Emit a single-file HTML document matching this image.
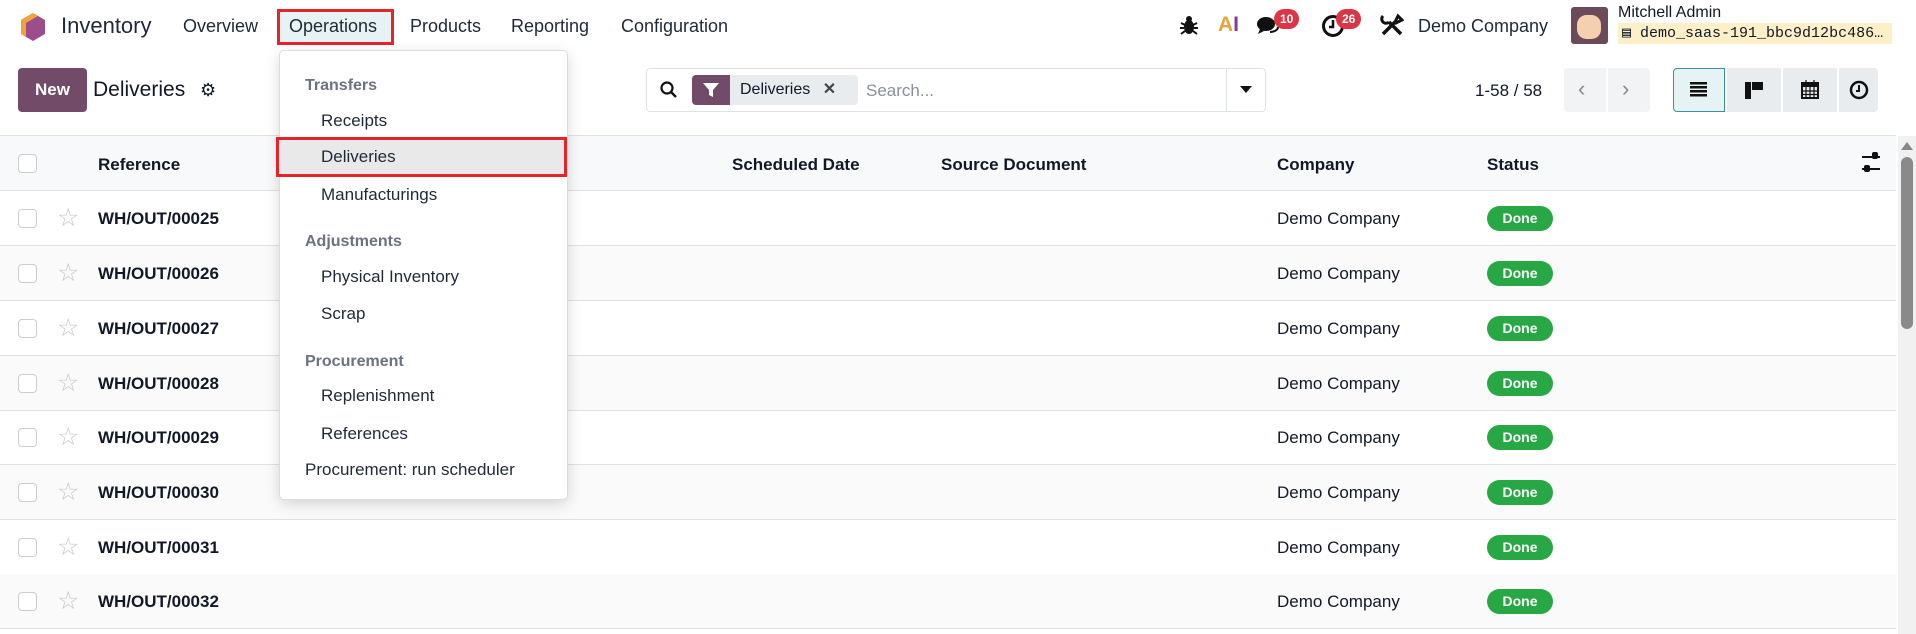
<!DOCTYPE html>
<html><head><meta charset="utf-8"><style>
*{box-sizing:border-box;margin:0;padding:0}
body{width:1916px;height:634px;overflow:hidden;background:#fff;font-family:"Liberation Sans",sans-serif;color:#111827;position:relative;font-size:17px}
.a{position:absolute;white-space:nowrap}
.nav{font-size:18px;color:#1f2937;top:16px}
.row{position:absolute;left:0;width:1896px;height:55px;border-bottom:1px solid #dee2e6}
.cb{position:absolute;left:18px;width:19px;height:19px;border:1px solid #ccc;border-radius:4px;background:#fff}
.ref{position:absolute;left:98px;font-weight:bold;font-size:17px;top:18px}
.co{position:absolute;left:1277px;top:18px}
.done{position:absolute;left:1487px;top:15px;width:66px;height:25px;border-radius:13px;background:#28a745;color:#fff;font-weight:bold;font-size:14px;text-align:center;line-height:25px}
.star{position:absolute;left:57px;top:12px;color:#c8c8c8;font-size:25px}
.mh{position:absolute;left:305px;color:#6b7280;font-weight:bold;font-size:16px}
.mi{position:absolute;left:321px;font-size:17px;color:#1f2937}
.vb{position:absolute;top:68px;width:54px;height:44px;background:#e9ecef}
.badge{position:absolute;background:#dc3545;color:#fff;font-size:12px;font-weight:bold;border-radius:10px;padding:0 6px;height:20px;line-height:20px}
</style></head><body>
<svg class="a" style="left:20px;top:12px" width="26" height="30" viewBox="0 0 26 30"><polygon points="13,1 25,8 25,22 13,29 1,22 1,8" fill="#9b4d8c"/><polygon points="13,1 1,8 1,22 6,25 6,11 18,4" fill="#f0a33b"/></svg>
<div class="a" style="left:61px;top:13px;font-size:22px;color:#1f2937">Inventory</div>
<div class="a nav" style="left:183px">Overview</div>
<div class="a" style="left:277px;top:9px;width:117px;height:36px;border:3px solid #e3242b;background:#e6f2f3"></div>
<div class="a nav" style="left:289px">Operations</div>
<div class="a nav" style="left:410px">Products</div>
<div class="a nav" style="left:511px">Reporting</div>
<div class="a nav" style="left:621px">Configuration</div>
<svg class="a" style="left:1180px;top:15px" width="18" height="20" viewBox="0 0 18 20"><ellipse cx="9" cy="12" rx="5" ry="7" fill="#111"/><circle cx="9" cy="4" r="3" fill="#111"/><path d="M1 8l4 2M17 8l-4 2M0 13h4M18 13h-4M1 19l4-3M17 19l-4-3" stroke="#111" stroke-width="2"/></svg>
<div class="a" style="left:1218px;top:13px;font-size:21px;font-weight:bold;color:#e8a33b">A<span style="color:#7b3f9e">I</span></div>
<svg class="a" style="left:1256px;top:15px" width="24" height="22" viewBox="0 0 24 22"><ellipse cx="10" cy="9" rx="9" ry="7" fill="#111"/><path d="M4 14l-2 5 6-3z" fill="#111"/><path d="M14 17c4 0 8-2 8-5" stroke="#111" stroke-width="2" fill="none"/></svg>
<div class="badge" style="left:1274px;top:9px">10</div>
<svg class="a" style="left:1321px;top:14px" width="24" height="24" viewBox="0 0 24 24"><circle cx="12" cy="12" r="9.5" fill="none" stroke="#111" stroke-width="3"/><path d="M12 6v7h-4" stroke="#111" stroke-width="2.5" fill="none"/></svg>
<div class="badge" style="left:1336px;top:9px">26</div>
<svg class="a" style="left:1380px;top:13px" width="24" height="24" viewBox="0 0 24 24"><path d="M3 21L15 9M9 9L21 21" stroke="#111" stroke-width="3.5"/><path d="M15 9l3-6 4 4-6 3zM3 3a4 4 0 0 0 6 6" stroke="#111" stroke-width="3" fill="none"/></svg>
<div class="a nav" style="left:1418px">Demo Company</div>
<div class="a" style="left:1571px;top:7px;width:37px;height:37px;background:#6b4a5a;border-radius:3px"><div style="margin:8px 6px;width:24px;height:24px;background:#f4d0b0;border-radius:40%"></div></div>
<div class="a" style="left:1618px;top:4px;font-size:16px">Mitchell Admin</div>
<div class="a" style="left:1618px;top:23px;width:274px;height:21px;background:#fdf0c8;font-family:'Liberation Mono',monospace;font-size:15px;line-height:21px;padding-left:4px">▤ demo_saas-191_bbc9d12bc486…</div>
<div class="a" style="left:18px;top:68px;width:69px;height:44px;background:#714b67;border-radius:4px;color:#fff;font-weight:bold;font-size:17px;text-align:center;line-height:44px">New</div>
<div class="a" style="left:93px;top:78px;font-size:21px">Deliveries</div>
<div class="a" style="left:200px;top:80px;font-size:18px">⚙</div>
<div class="a" style="left:646px;top:68px;width:620px;height:44px;border:1px solid #dee2e6;border-radius:4px"></div>
<svg class="a" style="left:660px;top:81px" width="18" height="18" viewBox="0 0 18 18"><circle cx="7" cy="7" r="5.5" fill="none" stroke="#111" stroke-width="2.2"/><line x1="11" y1="11" x2="16" y2="16" stroke="#111" stroke-width="2.4"/></svg>
<div class="a" style="left:692px;top:75px;width:38px;height:30px;background:#714b67;border-radius:4px 0 0 4px"></div>
<svg class="a" style="left:703px;top:83px" width="16" height="14" viewBox="0 0 16 14"><polygon points="0,0 16,0 10,7 10,14 6,12 6,7" fill="#fff"/></svg>
<div class="a" style="left:730px;top:75px;width:128px;height:30px;background:#e9ecef;border-radius:0 4px 4px 0;font-size:16px;line-height:30px;padding-left:10px">Deliveries <span style="margin-left:8px;font-weight:bold;color:#444">✕</span></div>
<div class="a" style="left:866px;top:81px;color:#8a8f98;font-size:17px">Search...</div>
<div class="a" style="left:1226px;top:69px;width:1px;height:42px;background:#dee2e6"></div>
<div class="a" style="left:1240px;top:86px;width:0;height:0;border-left:6px solid transparent;border-right:6px solid transparent;border-top:7px solid #111"></div>
<div class="a" style="left:1475px;top:81px;font-size:17px">1-58 / 58</div>
<div class="a" style="left:1564px;top:68px;width:86px;height:44px;background:#f1f3f5;border-radius:4px"></div>
<div class="a" style="left:1606px;top:68px;width:2px;height:44px;background:#fff"></div>
<div class="a" style="left:1578px;top:76px;font-size:22px;color:#888">‹</div>
<div class="a" style="left:1622px;top:76px;font-size:22px;color:#888">›</div>
<div class="vb" style="left:1673px;background:#e6f3f4;border:1px solid #3d8fa0;border-radius:4px 0 0 4px;width:52px"></div>
<div class="vb" style="left:1727px;width:54px"></div>
<div class="vb" style="left:1783px;width:54px"></div>
<div class="vb" style="left:1839px;border-radius:0 4px 4px 0;width:39px"></div>
<div class="a" style="left:1690px;top:82px;width:17px;height:15px;background:repeating-linear-gradient(#111 0 2.5px,transparent 2.5px 4px)"></div>
<div class="a" style="left:1745px;top:82px;width:6px;height:17px;background:#111"></div><div class="a" style="left:1752px;top:82px;width:11px;height:8px;background:#111"></div>
<svg class="a" style="left:1801px;top:80px" width="18" height="19" viewBox="0 0 18 19"><rect x="1" y="3" width="16" height="15" fill="none" stroke="#111" stroke-width="2"/><rect x="1" y="3" width="16" height="4" fill="#111"/><path d="M5 0v4M13 0v4M1 11h16M1 14.5h16M5 7v11M9 7v11M13 7v11" stroke="#111" stroke-width="1.2"/></svg>
<svg class="a" style="left:1849px;top:80px" width="20" height="20" viewBox="0 0 20 20"><circle cx="10" cy="10" r="8" fill="none" stroke="#111" stroke-width="2.5"/><path d="M10 5v6h-3" stroke="#111" stroke-width="2" fill="none"/></svg>
<div class="a" style="left:0;top:135px;width:1896px;height:1px;background:#dee2e6"></div>
<div class="a" style="left:0;top:136px;width:1896px;height:55px;background:#f8f9fa;border-bottom:1px solid #dee2e6"></div>
<div class="cb" style="top:154px"></div>
<div class="a" style="left:98px;top:155px;font-weight:bold">Reference</div>
<div class="a" style="left:732px;top:155px;font-weight:bold">Scheduled Date</div>
<div class="a" style="left:941px;top:155px;font-weight:bold">Source Document</div>
<div class="a" style="left:1277px;top:155px;font-weight:bold">Company</div>
<div class="a" style="left:1487px;top:155px;font-weight:bold">Status</div>
<div class="a" style="left:1862px;top:156px;width:18px;height:2px;background:#111"></div><div class="a" style="left:1862px;top:168px;width:18px;height:2px;background:#111"></div>
<div class="a" style="left:1872px;top:152px;width:6px;height:7px;background:#111;border-radius:2px"></div><div class="a" style="left:1864px;top:165px;width:6px;height:7px;background:#111;border-radius:2px"></div>

<div class="row" style="top:191px"><div class="cb" style="top:18px"></div><div class="star">☆</div><div class="ref">WH/OUT/00025</div><div class="co">Demo Company</div><div class="done">Done</div></div>
<div class="row" style="top:246px;background:#fafafa"><div class="cb" style="top:18px"></div><div class="star">☆</div><div class="ref">WH/OUT/00026</div><div class="co">Demo Company</div><div class="done">Done</div></div>
<div class="row" style="top:301px"><div class="cb" style="top:18px"></div><div class="star">☆</div><div class="ref">WH/OUT/00027</div><div class="co">Demo Company</div><div class="done">Done</div></div>
<div class="row" style="top:356px;background:#fafafa"><div class="cb" style="top:18px"></div><div class="star">☆</div><div class="ref">WH/OUT/00028</div><div class="co">Demo Company</div><div class="done">Done</div></div>
<div class="row" style="top:410px"><div class="cb" style="top:18px"></div><div class="star">☆</div><div class="ref">WH/OUT/00029</div><div class="co">Demo Company</div><div class="done">Done</div></div>
<div class="row" style="top:465px;background:#fafafa"><div class="cb" style="top:18px"></div><div class="star">☆</div><div class="ref">WH/OUT/00030</div><div class="co">Demo Company</div><div class="done">Done</div></div>
<div class="row" style="top:520px"><div class="cb" style="top:18px"></div><div class="star">☆</div><div class="ref">WH/OUT/00031</div><div class="co">Demo Company</div><div class="done">Done</div></div>
<div class="row" style="top:574px;background:#fafafa"><div class="cb" style="top:18px"></div><div class="star">☆</div><div class="ref">WH/OUT/00032</div><div class="co">Demo Company</div><div class="done">Done</div></div>
<div class="a" style="left:1898px;top:136px;width:18px;height:498px;background:#f1f1f1"></div>
<div class="a" style="left:1901px;top:142px;width:0;height:0;border-left:6px solid transparent;border-right:6px solid transparent;border-bottom:8px solid #888"></div>
<div class="a" style="left:1901px;top:157px;width:12px;height:172px;background:#8a8a8a;border-radius:6px"></div>
<div class="a" style="left:279px;top:50px;width:289px;height:450px;background:#fff;border:1px solid #dcdcdc;border-radius:5px;box-shadow:0 4px 14px rgba(0,0,0,.15)"></div>
<div class="mh" style="top:77px">Transfers</div>
<div class="mi" style="top:111px">Receipts</div>
<div class="a" style="left:276px;top:137px;width:291px;height:40px;background:#e9e9e9;border:3px solid #e3242b"></div>
<div class="mi" style="top:147px">Deliveries</div>
<div class="mi" style="top:185px">Manufacturings</div>
<div class="mh" style="top:233px">Adjustments</div>
<div class="mi" style="top:267px">Physical Inventory</div>
<div class="mi" style="top:304px">Scrap</div>
<div class="mh" style="top:353px">Procurement</div>
<div class="mi" style="top:386px">Replenishment</div>
<div class="mi" style="top:424px">References</div>
<div class="mi" style="top:460px;left:305px">Procurement: run scheduler</div>
</body></html>
